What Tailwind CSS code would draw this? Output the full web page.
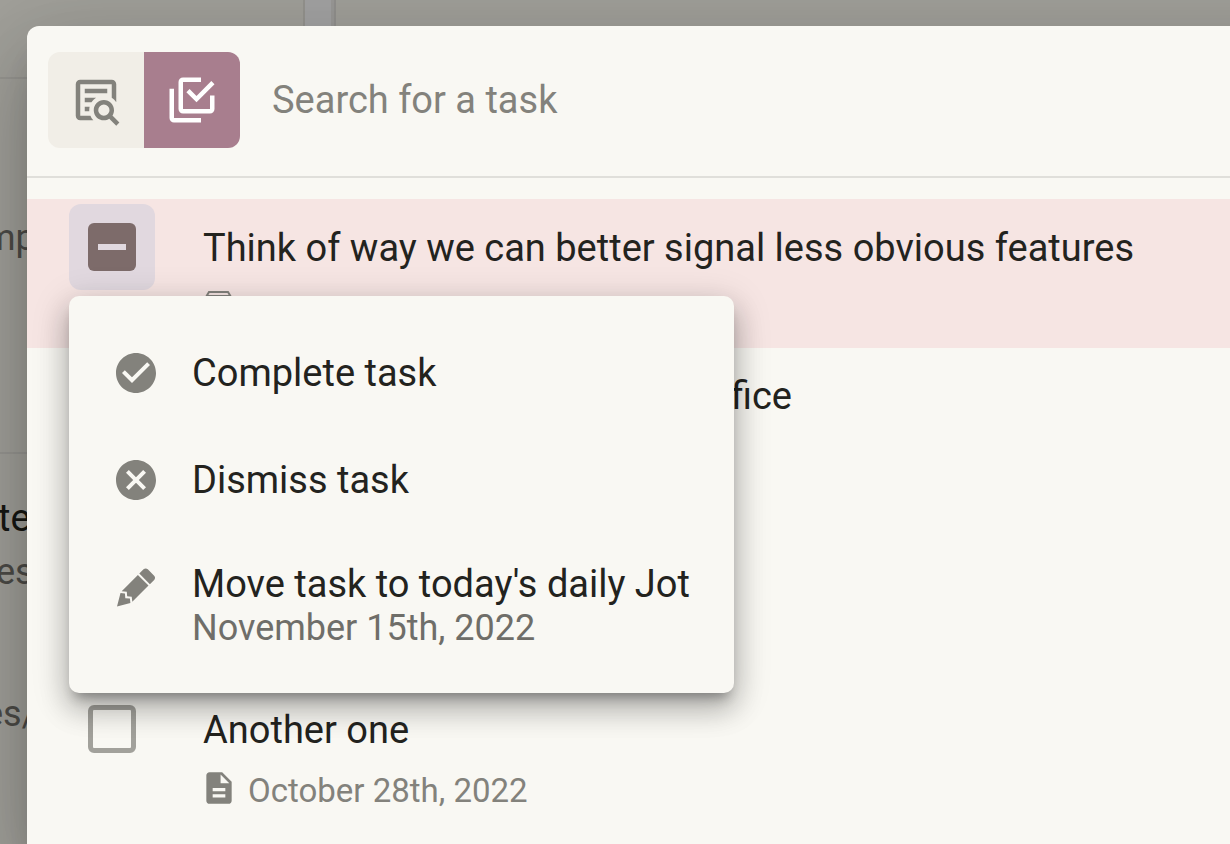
<!DOCTYPE html>
<html lang="en">
<head>
    <meta charset="UTF-8" />
    <meta name="viewport" content="width=device-width, initial-scale=1.0" />
    <title>Search for a task</title>
    <script src="https://cdn.jsdelivr.net/npm/@tailwindcss/browser@4"></script>
</head>
<body class="h-screen overflow-hidden bg-[#a1a09a] font-['Roboto',sans-serif] text-[#23231e]">
    <div class="relative h-full overflow-hidden">
        <!-- Dimmed page behind the dialog -->
        <div class="flex h-full" aria-hidden="true">
            <aside class="w-[305px] shrink-0 border-r-2 border-[#95948f] bg-[#a1a09a]">
                <div class="h-[79px] border-b-2 border-[#979691]"></div>
                <div class="h-[375px] border-b-2 border-[#979691] pt-[135px]">
                    <p class="-ml-4 text-[36px] leading-[48px] text-[#4c4b47]">mp</p>
                </div>
                <div class="pt-10">
                    <p class="-ml-0.5 text-[38px] leading-[48px] text-[#171712]">te</p>
                    <p class="-ml-1 pt-1.5 text-[36px] leading-[48px] text-[#4c4b47]">es</p>
                    <p class="-ml-4 pt-[94px] text-[36px] leading-[48px] text-[#4c4b47]">es/</p>
                </div>
            </aside>
            <div class="w-[31px] shrink-0 border-r-2 border-[#92918e] bg-[#a3a3a3]">
                <div class="ml-auto h-full w-[3px] bg-[#9a9997]"></div>
            </div>
            <div class="flex-1"></div>
        </div>

        <!-- Dialog -->
        <div role="dialog" aria-label="Search for a task" class="absolute top-[26px] -right-24 bottom-0 left-[27px] rounded-tl-xl bg-[#f9f8f3] shadow-[0_22px_30px_-14px_#00000033,0_48px_76px_6px_#00000024,0_18px_92px_16px_#0000001f]">
            <header class="flex items-center gap-8 border-b-2 border-[#e0dfda] pt-[26px] pr-5 pb-7 pl-[21px]">
                <div class="flex overflow-hidden rounded-xl">
                    <button type="button" aria-label="Search notes" class="grid size-24 place-items-center bg-[#f1eee7] text-[#83827c]">
                        <svg class="size-[54px]" viewBox="0 0 24 24" fill="currentColor"><path d="M15.5,12C18,12 20,14 20,16.5C20,17.38 19.75,18.21 19.31,18.9L22.39,22L21,23.39L17.88,20.32C17.19,20.75 16.37,21 15.5,21C13,21 11,19 11,16.5C11,14 13,12 15.5,12M15.5,14A2.5,2.5 0 0,0 13,16.5A2.5,2.5 0 0,0 15.5,19A2.5,2.5 0 0,0 18,16.5A2.5,2.5 0 0,0 15.5,14M5,3H19C20.11,3 21,3.89 21,5V13.03C20.5,12.23 19.81,11.54 19,11V5H5V19H9.5C9.81,19.75 10.26,20.42 10.81,21H5C3.89,21 3,20.11 3,19V5C3,3.89 3.89,3 5,3M7,7H17V9H7V7M7,11H12.03C11.23,11.5 10.54,12.2 10,13H7V11M7,15H9.17C9.06,15.5 9,16 9,16.5V17H7V15Z" /></svg>
                    </button>
                    <button type="button" aria-label="Search tasks" aria-pressed="true" class="grid size-24 place-items-center bg-[#a87e8e] text-white">
                        <svg class="size-[54px]" viewBox="0 0 24 24" fill="currentColor"><path d="M20,16V10H22V16A2,2 0 0,1 20,18H8C6.89,18 6,17.1 6,16V4C6,2.89 6.89,2 8,2H16V4H8V16H20M10.91,7.08L14,10.17L20.59,3.58L22,5L14,13L9.5,8.5L10.91,7.08M16,20V22H4A2,2 0 0,1 2,20V7H4V20H16Z" /></svg>
                    </button>
                </div>
                <input type="text" placeholder="Search for a task" aria-label="Search for a task" class="min-w-0 flex-1 bg-transparent text-[38px] leading-[48px] outline-none placeholder:text-[#83827c]" />
            </header>

            <ul class="pt-[21px]">
                <li class="relative flex h-[149px] bg-[#f6e5e3] pl-[42px]">
                    <label class="mt-[5px] grid size-[86px] place-items-center rounded-xl bg-[#e1d8df]">
                        <input type="checkbox" aria-label="Think of way we can better signal less obvious features" class="col-start-1 row-start-1 size-12 appearance-none rounded-md bg-[#7d6b6a]" />
                        <span class="col-start-1 row-start-1 h-1.5 w-7 bg-[#e1d8df]"></span>
                    </label>
                    <div class="pt-[25px] pl-12">
                        <p class="text-[38px] leading-[48px] whitespace-nowrap">Think of way we can better signal less obvious features</p>
                        <svg class="mt-[15px] size-[30px]" viewBox="0 0 30 30" fill="none" stroke="#83827c" stroke-width="2"><path d="M3 28V10L6 5H25L28 10V28ZM4 9H27" /></svg>
                    </div>

                    <!-- Menu opened from the checkbox -->
                    <div role="menu" class="absolute top-[97px] left-[42px] z-10 w-[665px] rounded-[10px] bg-[#f9f8f3] pt-[23px] pb-[21px] shadow-[0_10px_12px_-6px_#0000004d,0_16px_28px_2px_#00000033,0_8px_36px_4px_#00000024]">
                        <button type="button" role="menuitem" class="flex h-[107px] w-full items-center gap-8 pl-[43px] text-left">
                            <svg class="size-12 shrink-0 text-[#83827c]" viewBox="0 0 24 24" fill="currentColor"><path d="M12 2C6.5 2 2 6.5 2 12S6.5 22 12 22 22 17.5 22 12 17.5 2 12 2M10 17L5 12L6.41 10.59L10 14.17L17.59 6.58L19 8L10 17Z" /></svg>
                            <span class="text-[38px] leading-[48px]">Complete task</span>
                        </button>
                        <button type="button" role="menuitem" class="flex h-[107px] w-full items-center gap-8 pl-[43px] text-left">
                            <svg class="size-12 shrink-0 text-[#83827c]" viewBox="0 0 24 24" fill="currentColor"><path d="M12,2C17.53,2 22,6.47 22,12C22,17.53 17.53,22 12,22C6.47,22 2,17.53 2,12C2,6.47 6.47,2 12,2M15.59,7L12,10.59L8.41,7L7,8.41L10.59,12L7,15.59L8.41,17L12,13.41L15.59,17L17,15.59L13.41,12L17,8.41L15.59,7Z" /></svg>
                            <span class="text-[38px] leading-[48px]">Dismiss task</span>
                        </button>
                        <button type="button" role="menuitem" class="flex w-full items-start gap-8 pt-[27px] pb-6 pl-[43px] text-left">
                            <svg class="mt-[3px] size-12 shrink-0 text-[#83827c]" viewBox="0 0 24 24" fill="currentColor"><path d="M16.84,2.73C16.45,2.73 16.07,2.88 15.77,3.17L13.65,5.29L18.95,10.6L21.07,8.5C21.67,7.89 21.67,6.94 21.07,6.36L17.9,3.17C17.6,2.88 17.22,2.73 16.84,2.73M12.94,6L4.84,14.11L7.4,14.39L7.58,16.68L9.86,16.85L10.15,19.41L18.25,11.3M4.25,15.04L2.5,21.73L9.2,19.94L8.96,17.78L6.65,17.61L6.47,15.29" /></svg>
                            <span class="flex flex-col whitespace-nowrap">
                                <span class="text-[38px] leading-[48px]">Move task to today's daily Jot</span>
                                <span class="text-[36px] leading-10 text-[#6f6e69]">November 15th, 2022</span>
                            </span>
                        </button>
                    </div>
                </li>

                <!-- Mostly covered by the menu -->
                <li class="h-[149px] pt-6 pl-[176px]">
                    <p class="w-[589px] text-right text-[38px] leading-[48px]">office</p>
                </li>
                <li class="h-[184px]"></li>

                <li class="flex pl-[61px]">
                    <input id="task-another" type="checkbox" class="mt-6 size-12 shrink-0 appearance-none rounded-md border-[5px] border-[#a2a19b]" />
                    <div class="pt-[25px] pl-[67px]">
                        <label for="task-another" class="block text-[38px] leading-[48px]">Another one</label>
                        <p class="mt-[13px] flex items-center gap-2.5 text-[33px] leading-[48px] text-[#83827c]">
                            <svg class="mb-1.5 -ml-[3px] size-[38px]" viewBox="0 0 24 24" fill="currentColor"><path d="M14 2H6c-1.1 0-1.99.9-1.99 2L4 20c0 1.1.89 2 1.99 2H18c1.1 0 2-.9 2-2V8l-6-6zm2 16H8v-2h8v2zm0-4H8v-2h8v2zm-3-5V3.5L18.5 9H13z" /></svg>
                            <span>October 28th, 2022</span>
                        </p>
                    </div>
                </li>
            </ul>
        </div>
    </div>
</body>
</html>
